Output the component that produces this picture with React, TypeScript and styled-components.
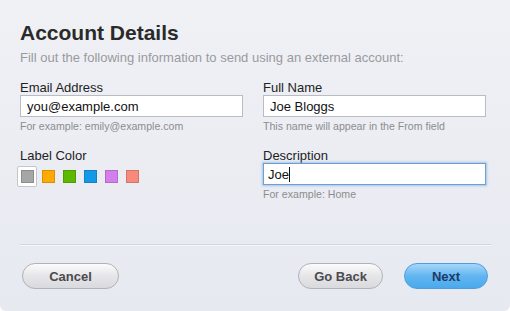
import React from 'react';
import styled, { createGlobalStyle } from 'styled-components';

const GlobalStyle = createGlobalStyle`
  html, body {
    margin: 0;
    padding: 0;
    background: #ffffff;
  }
  body {
    font-family: Arial, 'Liberation Sans', sans-serif;
  }
`;

const swatches = ['#a6a6a6', '#ffaa00', '#5cb800', '#1499e6', '#d27fec', '#f78a7a'];

const App = () => {
  return (
    <>
      <GlobalStyle />
      <Panel>
        <Header>
          <Title>Account Details</Title>
          <Subtitle>Fill out the following information to send using an external account:</Subtitle>
        </Header>
        <FormGrid>
          <Field>
            <Label>Email Address</Label>
            <TextInput defaultValue="you@example.com" />
            <Hint>For example: emily@example.com</Hint>
          </Field>
          <Field>
            <Label>Full Name</Label>
            <TextInput defaultValue="Joe Bloggs" />
            <Hint>This name will appear in the From field</Hint>
          </Field>
          <Field>
            <Label>Label Color</Label>
            <SwatchRow>
              {swatches.map((c, i) => (
                <SwatchSlot key={c} $selected={i === 0}>
                  <Swatch $color={c} />
                </SwatchSlot>
              ))}
            </SwatchRow>
          </Field>
          <Field>
            <Label>Description</Label>
            <FocusedInput>
              Joe<Caret />
            </FocusedInput>
            <Hint>For example: Home</Hint>
          </Field>
        </FormGrid>
        <Divider />
        <Footer>
          <PillButton $width={97}>Cancel</PillButton>
          <Spacer />
          <PillButton $width={85}>Go Back</PillButton>
          <PillButton $width={84} $primary>Next</PillButton>
        </Footer>
      </Panel>
    </>
  );
};

const Panel = styled.div`
  width: 510px;
  height: 311px;
  box-sizing: border-box;
  padding: 21px 20px 0 20px;
  background: linear-gradient(#f0f1f5, #e7e9f1);
  border-radius: 0 0 6px 6px;
  display: flex;
  flex-direction: column;
`;

const Header = styled.div`
  display: flex;
  flex-direction: column;
`;

const Title = styled.div`
  font-size: 21px;
  font-weight: bold;
  color: #2a2a2a;
  line-height: 24px;
`;

const Subtitle = styled.div`
  margin-top: 5px;
  font-size: 13px;
  color: #9a9a9e;
  line-height: 15px;
`;

const FormGrid = styled.div`
  margin-top: 15px;
  display: grid;
  grid-template-columns: 243px 223px;
  row-gap: 15px;
`;

const Field = styled.div`
  display: flex;
  flex-direction: column;
`;

const Label = styled.div`
  font-size: 13px;
  color: #222;
  line-height: 15px;
`;

const TextInput = styled.input`
  box-sizing: border-box;
  width: 223px;
  height: 22px;
  margin: 0;
  padding: 1px 6px 0;
  border: 1px solid #b9bcc2;
  background: #fff;
  font-family: Arial, 'Liberation Sans', sans-serif;
  font-size: 13px;
  color: #111;
  outline: none;
`;

const FocusedInput = styled.div`
  box-sizing: border-box;
  width: 223px;
  height: 22px;
  padding: 3px 4px 0;
  border: 1px solid #6d9fd0;
  box-shadow: 0 0 2px 1px rgba(120, 170, 225, 0.6);
  background: #fff;
  font-size: 13px;
  color: #111;
  line-height: 15px;
  display: flex;
  align-items: flex-start;
`;

const Caret = styled.span`
  display: inline-block;
  width: 1px;
  height: 15px;
  background: #111;
`;

const Hint = styled.div`
  margin-top: 3px;
  font-size: 10.6px;
  color: #8c8c90;
  line-height: 13px;
`;

const SwatchRow = styled.div`
  display: flex;
  margin-top: 3px;
  margin-left: -3px;
  gap: 1px;
`;

const SwatchSlot = styled.div<{ $selected?: boolean }>`
  box-sizing: border-box;
  width: 20px;
  height: 21px;
  display: flex;
  align-items: center;
  justify-content: center;
  border-radius: 2px;
  border: 1px solid ${({ $selected }) => ($selected ? '#c4c6cc' : 'transparent')};
  background: ${({ $selected }) => ($selected ? '#ffffff' : 'transparent')};
`;

const Swatch = styled.div<{ $color: string }>`
  width: 13px;
  height: 13px;
  box-sizing: border-box;
  background: ${({ $color }) => $color};
  border: 1px solid rgba(0, 0, 0, 0.15);
`;

const Divider = styled.div`
  margin-top: 43px;
  width: 471px;
  height: 1px;
  background: #d3d6de;
  border-bottom: 1px solid #f6f7fa;
`;

const Footer = styled.div`
  margin-top: 17px;
  display: flex;
  align-items: center;
  gap: 21px;
  padding: 0 2px;
`;

const Spacer = styled.div`
  flex: 1;
`;

const PillButton = styled.div<{ $width: number; $primary?: boolean }>`
  box-sizing: border-box;
  width: ${({ $width }) => $width}px;
  height: 26px;
  border-radius: 13px;
  display: flex;
  align-items: center;
  justify-content: center;
  font-size: 13px;
  font-weight: bold;
  cursor: pointer;
  color: ${({ $primary }) => ($primary ? '#1d3a6b' : '#4a4a50')};
  border: 1px solid ${({ $primary }) => ($primary ? '#4d9de0' : '#b0b2b8')};
  background: ${({ $primary }) =>
    $primary
      ? 'linear-gradient(#a6d7fa, #62b6f0 50%, #4aa9ec)'
      : 'linear-gradient(#fbfbfb, #e6e6e8 50%, #d9dadd)'};
`;

export default App;
